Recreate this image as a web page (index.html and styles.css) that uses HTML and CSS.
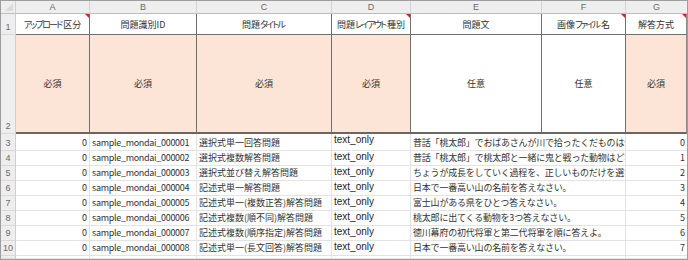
FILE: index.html
```html
<!DOCTYPE html>
<html lang="ja">
<head>
<meta charset="utf-8">
<link rel="stylesheet" href="styles.css">
</head>
<body>
<div class="sheet">
  <div class="corner"><span class="sel"></span></div>
  <div class="colh">A</div>
  <div class="colh">B</div>
  <div class="colh">C</div>
  <div class="colh">D</div>
  <div class="colh">E</div>
  <div class="colh">F</div>
  <div class="colh last">G</div>

  <div class="rowh">1</div>
  <div class="hd note"><span class="kn">アップロード</span>区分</div>
  <div class="hd">問題識別ID</div>
  <div class="hd">問題<span class="kn">タイトル</span></div>
  <div class="hd note">問題<span class="kn">レイアウト</span>種別</div>
  <div class="hd">問題文</div>
  <div class="hd note">画像<span class="kn">ファイル</span>名</div>
  <div class="hd note last">解答方式</div>

  <div class="rowh">2</div>
  <div class="rq req">必須</div>
  <div class="rq req">必須</div>
  <div class="rq req">必須</div>
  <div class="rq req">必須</div>
  <div class="rq">任意</div>
  <div class="rq">任意</div>
  <div class="rq req last">必須</div>

  <div class="rowh">3</div>
  <div class="c num">0</div>
  <div class="c id">sample_mondai_000001</div>
  <div class="c">選択式単一回答問題</div>
  <div class="c lay">text_only</div>
  <div class="c q">昔話「桃太郎」でおばあさんが川で拾ったくだものは何</div>
  <div class="c num last">0</div>

  <div class="rowh">4</div>
  <div class="c num">0</div>
  <div class="c id">sample_mondai_000002</div>
  <div class="c">選択式複数解答問題</div>
  <div class="c lay">text_only</div>
  <div class="c q">昔話「桃太郎」で桃太郎と一緒に鬼と戦った動物はどれ</div>
  <div class="c num last">1</div>

  <div class="rowh">5</div>
  <div class="c num">0</div>
  <div class="c id">sample_mondai_000003</div>
  <div class="c">選択式並び替え解答問題</div>
  <div class="c lay">text_only</div>
  <div class="c q">ちょうが成長をしていく過程を、正しいものだけを選び</div>
  <div class="c num last">2</div>

  <div class="rowh">6</div>
  <div class="c num">0</div>
  <div class="c id">sample_mondai_000004</div>
  <div class="c">記述式単一解答問題</div>
  <div class="c lay">text_only</div>
  <div class="c q">日本で一番高い山の名前を答えなさい。</div>
  <div class="c num last">3</div>

  <div class="rowh">7</div>
  <div class="c num">0</div>
  <div class="c id">sample_mondai_000005</div>
  <div class="c">記述式単一(複数正答)解答問題</div>
  <div class="c lay">text_only</div>
  <div class="c q">富士山がある県をひとつ答えなさい。</div>
  <div class="c num last">4</div>

  <div class="rowh">8</div>
  <div class="c num">0</div>
  <div class="c id">sample_mondai_000006</div>
  <div class="c">記述式複数(順不同)解答問題</div>
  <div class="c lay">text_only</div>
  <div class="c q">桃太郎に出てくる動物を3つ答えなさい。</div>
  <div class="c num last">5</div>

  <div class="rowh">9</div>
  <div class="c num">0</div>
  <div class="c id">sample_mondai_000007</div>
  <div class="c">記述式複数(順序指定)解答問題</div>
  <div class="c lay">text_only</div>
  <div class="c q">徳川幕府の初代将軍と第二代将軍を順に答えよ。</div>
  <div class="c num last">6</div>

  <div class="rowh">10</div>
  <div class="c num">0</div>
  <div class="c id">sample_mondai_000008</div>
  <div class="c">記述式単一(長文回答)解答問題</div>
  <div class="c lay">text_only</div>
  <div class="c q">日本で一番高い山の名前を答えなさい。</div>
  <div class="c num last">7</div>

  <div class="rowh stub"></div>
  <div class="c stub"></div>
  <div class="c stub"></div>
  <div class="c stub"></div>
  <div class="c stub"></div>
  <div class="c q stub"></div>
  <div class="c stub last"></div>
</div>
</body>
</html>
```

FILE: styles.css
```css
* { box-sizing: border-box; }
html, body { margin: 0; padding: 0; background: #ffffff; }
body {
  font-family: "Noto Sans CJK JP", "Noto Sans", sans-serif;
  font-size: 9px;
  color: #262626;
}
.sheet {
  width: 688px;
  height: 260px;
  border: 1px solid #9e9e9e;
  display: grid;
  grid-template-columns: 15px 74px 107px 135px 79px 131px 84px 61px;
  grid-template-rows: 13px 21px 99px 17px repeat(7, 15px) 3px;
  overflow: hidden;
  background: #ffffff;
}
.corner {
  background: #eeeeee;
  border-right: 1px solid #cfcfcf;
  border-bottom: 1px solid #bdbdbd;
  position: relative;
}
.sel {
  position: absolute;
  right: 2px;
  bottom: 2px;
  width: 0;
  height: 0;
  border-left: 8px solid transparent;
  border-bottom: 8px solid #dadada;
}
.colh {
  background: #eeeeee;
  color: #6a6a6a;
  font-family: "Liberation Sans", sans-serif;
  font-size: 9px;
  line-height: 12px;
  text-align: center;
  border-right: 1px solid #d4d4d4;
  border-bottom: 1px solid #bdbdbd;
}
.colh.last { border-right: none; }
.rowh {
  background: #eeeeee;
  color: #6a6a6a;
  font-family: "Liberation Sans", sans-serif;
  font-size: 9px;
  border-right: 1px solid #cfcfcf;
  border-bottom: 1px solid #d9d9d9;
  display: flex;
  align-items: flex-end;
  justify-content: center;
  padding-bottom: 1px;
  line-height: 11px;
}
.hd {
  position: relative;
  display: flex;
  align-items: center;
  justify-content: center;
  white-space: nowrap;
  border-right: 1px solid #6f6f6f;
  border-bottom: 1px solid #6f6f6f;
  color: #333333;
  padding-top: 1px;
}
.kn {
  font-feature-settings: "palt";
  letter-spacing: -1.8px;
  margin-right: 1.8px;
}
.rq {
  display: flex;
  align-items: center;
  justify-content: center;
  border-right: 1px solid #6f6f6f;
  border-bottom: 2px solid #6b6662;
  color: #333333;
  background: #ffffff;
}
.req { background: #fce4d6; }
.hd.last, .rq.last { border-right: 1px solid #8a8a8a; }
.note::after {
  content: "";
  position: absolute;
  top: 0;
  right: 0;
  width: 0;
  height: 0;
  border-left: 4px solid transparent;
  border-top: 4px solid #e0201b;
}
.c {
  display: flex;
  align-items: flex-end;
  white-space: nowrap;
  overflow: hidden;
  padding: 0 2px 1px 2px;
  line-height: 12px;
  border-right: 1px solid #e3e3e3;
  border-bottom: 1px solid #e3e3e3;
  color: #333333;
}
.num { justify-content: flex-end; }
.id { letter-spacing: -0.3px; }
.c.last { border-right: none; }
.lay {
  align-items: flex-start;
  font-family: "Liberation Sans", sans-serif;
  font-size: 10px;
  color: #1e1e1e;
  padding-top: 0;
}
.q {
  grid-column: span 2;
  border-right: 1px solid #e3e3e3;
  letter-spacing: -0.2px;
}
.stub { padding: 0; }
```
